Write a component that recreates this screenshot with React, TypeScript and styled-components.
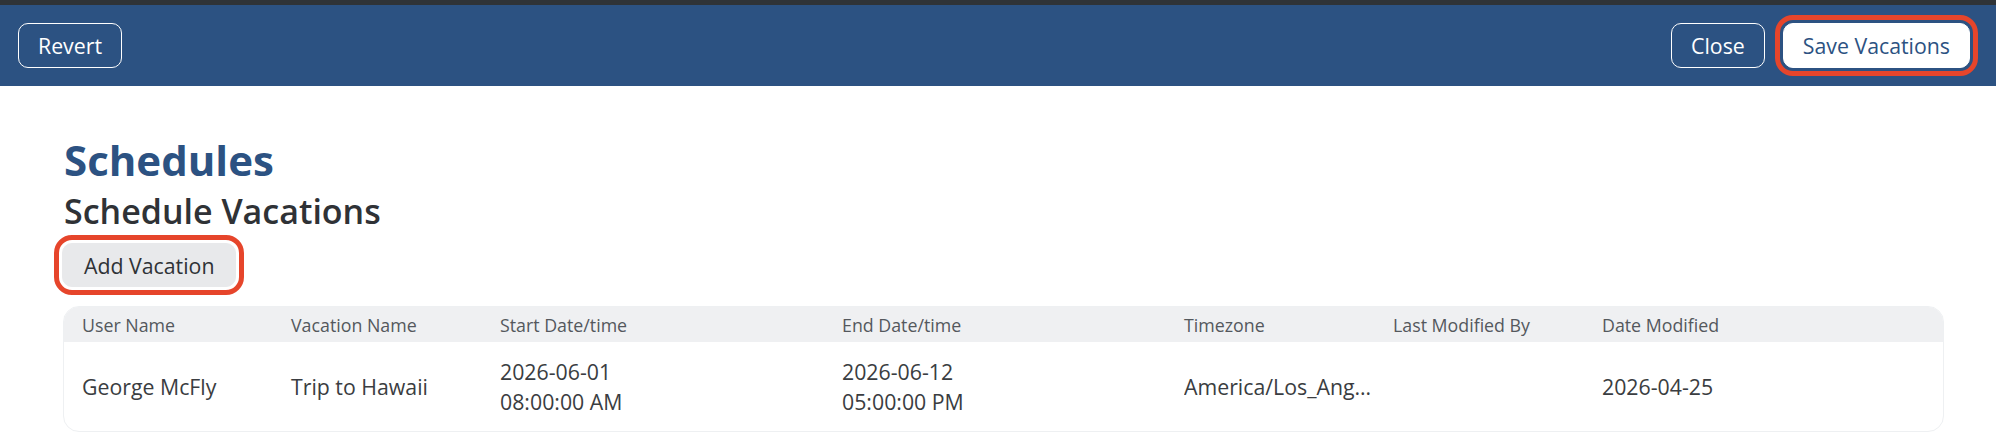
import React from "react";
import styled, { createGlobalStyle } from "styled-components";

const GlobalStyle = createGlobalStyle`
  html, body { margin: 0; padding: 0; background: #ffffff; }
  body { font-family: "Open Sans", "Liberation Sans", sans-serif; color: #2f3236; }
  * { box-sizing: border-box; }
`;

const Page = styled.div`
  width: 1996px;
  min-height: 448px;
  background: #ffffff;
`;

const TopBar = styled.header`
  height: 86px;
  border-top: 5px solid #2f3337;
  background: #2c5282;
  display: flex;
  align-items: center;
  justify-content: space-between;
  padding: 0 26px 0 18px;
`;

const Group = styled.div`
  display: flex;
  align-items: center;
  gap: 18px;
`;

const Button = styled.button<{ $variant: "ghost" | "solid" | "gray"; $marked?: boolean }>`
  font-family: "Open Sans", "Liberation Sans", sans-serif;
  font-size: 21.3px;
  line-height: 1;
  height: ${(p) => (p.$variant === "gray" ? "44px" : "45px")};
  padding: 0 ${(p) => (p.$variant === "gray" ? "21px" : "19px")};
  border-radius: 10px;
  cursor: pointer;
  display: inline-flex;
  align-items: center;
  border: 1px solid
    ${(p) => (p.$variant === "ghost" ? "#ffffff" : p.$variant === "solid" ? "#ffffff" : "#e8e9eb")};
  background: ${(p) => (p.$variant === "ghost" ? "transparent" : p.$variant === "solid" ? "#ffffff" : "#e8e9eb")};
  color: ${(p) => (p.$variant === "ghost" ? "#ffffff" : p.$variant === "solid" ? "#2c5282" : "#2f3236")};
  outline: ${(p) => (p.$marked ? "5px solid #e6452b" : "none")};
  outline-offset: 3px;
`;

const Content = styled.main`
  padding: 49px 52px 0 63px;
`;

const Title = styled.h1`
  margin: 0 0 0 1px;
  font-size: 42px;
  line-height: 50.4px;
  font-weight: 700;
  color: #2c5282;
`;

const Subtitle = styled.h2`
  margin: 6px 0 0 1px;
  font-size: 34px;
  line-height: 40.8px;
  font-weight: 600;
  color: #2f3236;
`;

const Actions = styled.div`
  margin: 11px 0 0 -1px;
`;

const Table = styled.div`
  margin-top: 19px;
  border: 1px solid #eef0f2;
  border-radius: 16px;
  overflow: hidden;
  display: grid;
  grid-template-columns: 209px 209px 342px 342px 209px 209px 1fr;
`;

const HeadCell = styled.div`
  height: 35px;
  background: #eff0f2;
  display: flex;
  align-items: center;
  padding-left: 18px;
  font-size: 17.8px;
  color: #54585d;
  white-space: nowrap;
`;

const Cell = styled.div`
  height: 89px;
  display: flex;
  flex-direction: column;
  justify-content: center;
  padding: 0 0 0 18px;
  font-size: 21.3px;
  line-height: 30px;
  color: #3a3d41;
  min-width: 0;
`;

const Clip = styled.span`
  display: block;
  white-space: nowrap;
  overflow: hidden;
  text-overflow: ellipsis;
`;

const columns = [
  "User Name",
  "Vacation Name",
  "Start Date/time",
  "End Date/time",
  "Timezone",
  "Last Modified By",
  "Date Modified",
];

const rows = [
  {
    user: "George McFly",
    name: "Trip to Hawaii",
    start: ["2026-06-01", "08:00:00 AM"],
    end: ["2026-06-12", "05:00:00 PM"],
    tz: "America/Los_Angeles",
    by: "",
    modified: "2026-04-25",
  },
];

export default function App() {
  return (
    <Page>
      <GlobalStyle />
      <TopBar>
        <Button $variant="ghost">Revert</Button>
        <Group>
          <Button $variant="ghost">Close</Button>
          <Button $variant="solid" $marked>
            Save Vacations
          </Button>
        </Group>
      </TopBar>
      <Content>
        <Title>Schedules</Title>
        <Subtitle>Schedule Vacations</Subtitle>
        <Actions>
          <Button $variant="gray" $marked>
            Add Vacation
          </Button>
        </Actions>
        <Table>
          {columns.map((c) => (
            <HeadCell key={c}>{c}</HeadCell>
          ))}
          {rows.map((r) => (
            <React.Fragment key={r.user}>
              <Cell>{r.user}</Cell>
              <Cell>{r.name}</Cell>
              <Cell>
                <span>{r.start[0]}</span>
                <span>{r.start[1]}</span>
              </Cell>
              <Cell>
                <span>{r.end[0]}</span>
                <span>{r.end[1]}</span>
              </Cell>
              <Cell>
                <Clip>{r.tz}</Clip>
              </Cell>
              <Cell>{r.by}</Cell>
              <Cell>{r.modified}</Cell>
            </React.Fragment>
          ))}
        </Table>
      </Content>
    </Page>
  );
}
